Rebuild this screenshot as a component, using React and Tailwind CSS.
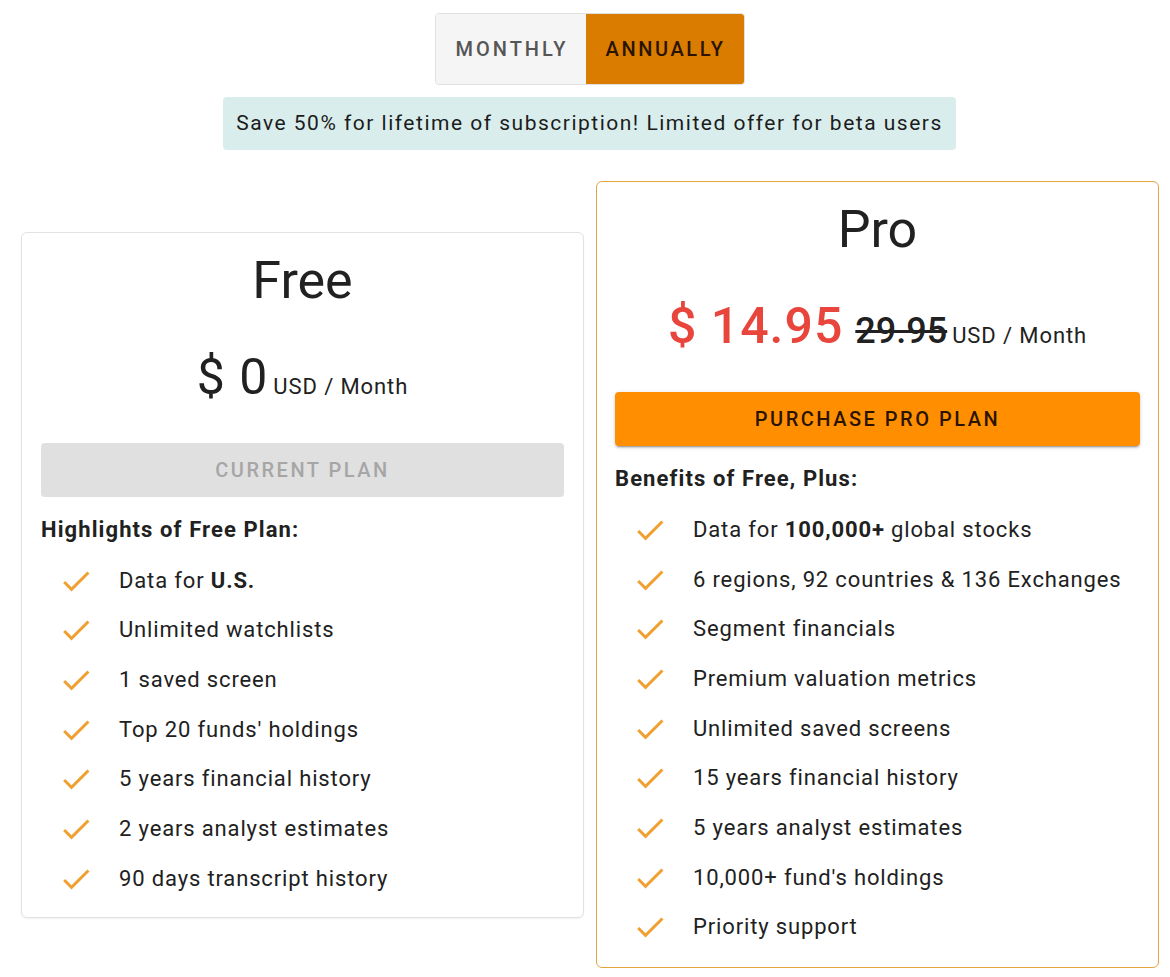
import React from "react";

const Check = () => (
  <svg viewBox="0 0 24 24" className="w-[36px] h-[36px] shrink-0" fill="#f0a030">
    <path d="M9 16.17 4.83 12l-1.42 1.41L9 19 21 7l-1.41-1.41z" />
  </svg>
);

const Item = ({ children }) => (
  <li className="flex items-center h-[49.7px]">
    <div className="w-[78px] pl-[17px] flex items-center">
      <Check />
    </div>
    <span className="text-[22px] leading-[30px] tracking-[0.85px] text-[#212121]">{children}</span>
  </li>
);

const freeItems = [
  <>Data for <b className="font-bold">U.S.</b></>,
  "Unlimited watchlists",
  "1 saved screen",
  "Top 20 funds' holdings",
  "5 years financial history",
  "2 years analyst estimates",
  "90 days transcript history",
];

const proItems = [
  <>Data for <b className="font-bold">100,000+</b> global stocks</>,
  "6 regions, 92 countries & 136 Exchanges",
  "Segment financials",
  "Premium valuation metrics",
  "Unlimited saved screens",
  "15 years financial history",
  "5 years analyst estimates",
  "10,000+ fund's holdings",
  "Priority support",
];

export default function App() {
  return (
    <div
      className="w-[1170px] h-[977px] bg-white overflow-hidden text-[#212121]"
      style={{ fontFamily: "Roboto, 'Liberation Sans', sans-serif" }}
    >
      <div className="flex flex-col items-center pt-[13px] pl-[9px]">
        <div className="flex h-[72px] rounded-[4px] border border-[#e0e0e0] overflow-hidden">
          <button className="w-[150px] pl-[3px] bg-[#f5f5f5] text-[#555555] text-[20px] font-medium tracking-[3px] uppercase">
            Monthly
          </button>
          <button className="w-[158px] pl-[2px] bg-[#d97c00] text-[#2a1400] text-[20px] font-medium tracking-[2.6px] uppercase">
            Annually
          </button>
        </div>
        <div className="mt-[12px] h-[53px] px-[13px] flex items-center rounded-[4px] bg-[#d9eeec] text-[21px] tracking-[1.5px] text-[#1c1c1c]">
          Save 50% for lifetime of subscription! Limited offer for beta users
        </div>
      </div>

      <div className="flex items-center gap-[12px] pl-[21px] mt-[31px]">
        {/* Free card */}
        <div className="w-[563px] rounded-[6px] border border-[#e2e2e2] px-[19px] pt-[18px] pb-[13px] shadow-[0_1px_2px_rgba(0,0,0,0.06)]">
          <div className="text-center text-[52px] leading-[60px]">Free</div>
          <div className="mt-[36px] h-[60px] flex items-baseline justify-center">
            <span className="text-[50px] leading-[60px] tracking-[1px]">$ 0</span>
            <span className="ml-[5px] text-[22px] tracking-[0.9px]">USD / Month</span>
          </div>
          <div className="mt-[36px] h-[54px] rounded-[4px] bg-[#e0e0e0] flex items-center justify-center text-[20px] font-medium tracking-[2.5px] text-[#a6a6a6]">
            CURRENT PLAN
          </div>
          <div className="mt-[18px] text-[22px] leading-[30px] font-bold tracking-[1.1px]">Highlights of Free Plan:</div>
          <ul className="mt-[11px]">
            {freeItems.map((t, i) => (
              <Item key={i}>{t}</Item>
            ))}
          </ul>
        </div>

        {/* Pro card */}
        <div className="w-[563px] rounded-[6px] border border-[#e3a540] px-[18px] pt-[18px] pb-[15px]">
          <div className="text-center text-[52px] leading-[60px]">Pro</div>
          <div className="mt-[36px] h-[60px] flex items-baseline justify-center">
            <span className="text-[50px] leading-[60px] font-medium tracking-[1px] text-[#e8453c]">$ 14.95</span>
            <span className="ml-[12px] text-[36px] font-medium line-through">29.95</span>
            <span className="ml-[5px] text-[22px] tracking-[0.9px]">USD / Month</span>
          </div>
          <div className="mt-[36px] h-[54px] rounded-[4px] bg-[#ff8f00] flex items-center justify-center text-[20px] font-medium tracking-[2.5px] text-[#2a1400] shadow-[0_3px_1px_-2px_rgba(0,0,0,0.2),0_2px_2px_0_rgba(0,0,0,0.14),0_1px_5px_0_rgba(0,0,0,0.12)]">
            PURCHASE PRO PLAN
          </div>
          <div className="mt-[18px] text-[22px] leading-[30px] font-bold tracking-[1.1px]">Benefits of Free, Plus:</div>
          <ul className="mt-[11px]">
            {proItems.map((t, i) => (
              <Item key={i}>{t}</Item>
            ))}
          </ul>
        </div>
      </div>
    </div>
  );
}
